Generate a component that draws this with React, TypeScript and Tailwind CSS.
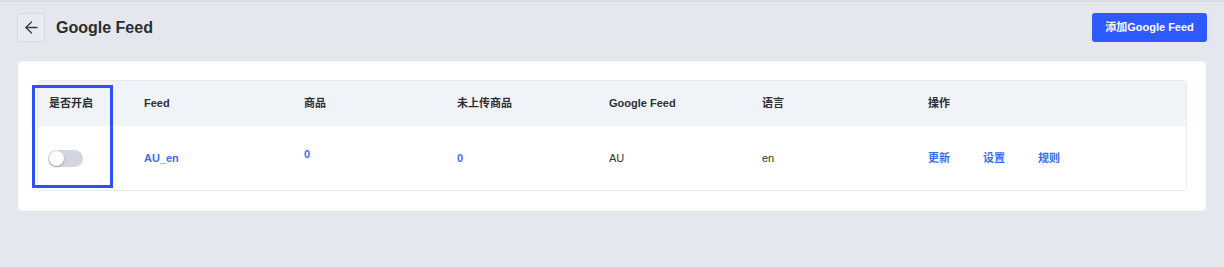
import { ArrowLeft } from 'lucide-react';

const cols = 'grid grid-cols-[95px_160px_153px_152px_153px_166px_1fr]';
const headers = ['是否开启', 'Feed', '商品', '未上传商品', 'Google Feed', '语言', '操作'];

function Toggle() {
  return (
    <span className="relative inline-flex h-[17px] w-[35px] items-center rounded-full bg-[#d3d6e0]">
      <span className="absolute left-[1px] h-[15px] w-[15px] rounded-full bg-white shadow-[0_1px_2px_rgba(0,0,0,0.3)]" />
    </span>
  );
}

export default function App() {
  return (
    <div
      className="relative h-[267px] w-full border-t-2 border-[#dadde4] bg-[#e4e7ee] text-[#2b2b2b]"
      style={{ fontFamily: '"Liberation Sans", "Noto Sans CJK SC", sans-serif' }}
    >
      <div className="flex items-center justify-between px-[17px] pt-[10px]">
        <div className="flex items-center gap-[11px]">
          <button
            type="button"
            className="flex h-[29px] w-[28px] items-center justify-center rounded-[3px] border border-[#d6d9e0] bg-[#e8ebf1]"
          >
            <ArrowLeft size={19} strokeWidth={1.7} className="text-[#3a3d44]" />
          </button>
          <h1 className="mt-[1px] text-[16px] font-semibold text-[#2a2c31]">Google Feed</h1>
        </div>
        <button
          type="button"
          className="mt-[1px] h-[29px] w-[115px] rounded-[3px] bg-[#2d5bff] text-[11px] font-semibold text-white"
        >
          添加Google Feed
        </button>
      </div>

      <div className="mx-[18px] mt-[19px] rounded-[5px] bg-white px-[19px] pb-[20px] pt-[19px]">
        <div className="overflow-hidden rounded-[5px] border border-[#e6e9ef]">
          <div className={`${cols} h-[45px] items-center bg-[#f0f3f8] text-[11px] font-semibold text-[#2e2f33]`}>
            {headers.map((h) => (
              <div key={h} className="pl-[11px]">
                {h}
              </div>
            ))}
          </div>
          <div className={`${cols} h-[64px] items-center text-[11px]`}>
            <div className="flex pl-[10px]">
              <Toggle />
            </div>
            <div className="pl-[11px] font-semibold text-[#3a6cf4]">AU_en</div>
            <div className="mb-[8px] pl-[11px] font-semibold text-[#3a6cf4]">0</div>
            <div className="pl-[11px] font-semibold text-[#3a6cf4]">0</div>
            <div className="pl-[11px] text-[#333]">AU</div>
            <div className="pl-[11px] text-[#333]">en</div>
            <div className="flex gap-[33px] pl-[11px] font-semibold text-[#3a6cf4]">
              <span>更新</span>
              <span>设置</span>
              <span>规则</span>
            </div>
          </div>
        </div>
      </div>

      <div className="pointer-events-none absolute left-[32px] top-[83px] h-[103px] w-[81px] border-[3px] border-[#2a52f6]" />
    </div>
  );
}
